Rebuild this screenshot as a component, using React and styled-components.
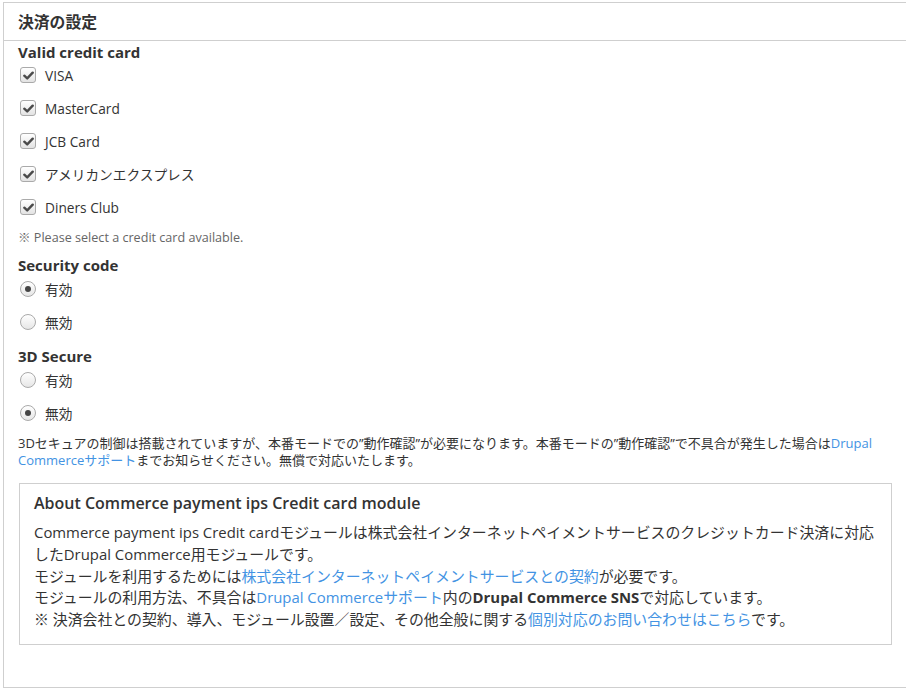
import React from "react";
import styled, { createGlobalStyle } from "styled-components";

const Global = createGlobalStyle`
  html, body { margin: 0; padding: 0; background: #fff; overflow: hidden; }
  body {
    font-family: "Open Sans", "Noto Sans CJK JP", sans-serif;
    color: #333;
    width: 906px;
    height: 688px;
  }
`;

const Fieldset = styled.section`
  margin: 2px 0 0 3px;
  width: 910px;
  border: 1px solid #cfcfcf;
  box-sizing: border-box;
  height: 686px;
`;

const Header = styled.h2`
  margin: 0;
  height: 38px;
  display: flex;
  align-items: center;
  padding: 0 14px 1px;
  box-sizing: border-box;
  font-size: 15.8px;
  font-weight: 700;
  border-bottom: 1px solid #cfcfcf;
  color: #333;
`;

const Body = styled.div`
  padding: 1px 20px 0 14px;
`;

const Group = styled.div`
  margin-top: ${(p) => p.$mt || 0}px;
`;

const Heading = styled.div`
  font-size: 15px;
  font-weight: 700;
  line-height: 20px;
  margin-bottom: ${(p) => p.$mb ?? 2}px;
`;

const Options = styled.div`
  display: flex;
  flex-direction: column;
  gap: 11px;
`;

const Option = styled.label`
  display: flex;
  align-items: center;
  gap: 9px;
  height: 22px;
  font-size: 13.7px;
  padding-left: 2px;
`;

const Box = styled.span`
  width: 16px;
  height: 16px;
  box-sizing: border-box;
  border: 1px solid #aaa;
  border-radius: 3px;
  background: linear-gradient(#ffffff, #e3e3e3);
  display: flex;
  align-items: center;
  justify-content: center;
`;

const Radio = styled.span`
  width: 16px;
  height: 16px;
  box-sizing: border-box;
  border: 1px solid #aaa;
  border-radius: 50%;
  background: linear-gradient(#ffffff, #e6e6e6);
  display: flex;
  align-items: center;
  justify-content: center;
`;

const Dot = styled.span`
  width: 6px;
  height: 6px;
  border-radius: 50%;
  background: #444;
`;

const Note = styled.div`
  font-size: 12.6px;
  line-height: 17px;
  color: #666;
  margin-top: ${(p) => p.$mt || 0}px;
`;

const Para = styled.p`
  margin: 11px 0 0;
  font-size: 13px;
  line-height: 17px;
  color: #333;
`;

const Link = styled.a`
  color: #4393e3;
  text-decoration: none;
`;

const InfoBox = styled.div`
  margin: 14px 0 0 1px;
  border: 1px solid #cfcfcf;
  padding: 8px 14px 13px;
`;

const InfoTitle = styled.div`
  font-size: 16px;
  font-weight: 600;
  line-height: 22px;
  margin-bottom: 8px;
`;

const InfoText = styled.div`
  font-size: 14.9px;
  line-height: 21.75px;
`;

const Check = () => (
  <svg width="11" height="9" viewBox="0 0 11 9">
    <path d="M1.3 4.7 L4.2 7.4 L9.7 1.7" fill="none" stroke="#4a4a4a" strokeWidth="2.4" strokeLinecap="round" strokeLinejoin="round" />
  </svg>
);

const CheckOpt = ({ children }) => (
  <Option>
    <Box><Check /></Box>
    {children}
  </Option>
);

const RadioOpt = ({ on, children }) => (
  <Option>
    <Radio>{on && <Dot />}</Radio>
    {children}
  </Option>
);

export default function App() {
  return (
    <>
      <Global />
      <Fieldset>
        <Header>決済の設定</Header>
        <Body>
          <Group>
            <Heading>Valid credit card</Heading>
            <Options>
              <CheckOpt>VISA</CheckOpt>
              <CheckOpt>MasterCard</CheckOpt>
              <CheckOpt>JCB Card</CheckOpt>
              <CheckOpt>アメリカンエクスプレス</CheckOpt>
              <CheckOpt>Diners Club</CheckOpt>
            </Options>
            <Note $mt={11}>※ Please select a credit card available.</Note>
          </Group>
          <Group $mt={9}>
            <Heading $mb={3}>Security code</Heading>
            <Options>
              <RadioOpt on>有効</RadioOpt>
              <RadioOpt>無効</RadioOpt>
            </Options>
          </Group>
          <Group $mt={13}>
            <Heading $mb={3}>3D Secure</Heading>
            <Options>
              <RadioOpt>有効</RadioOpt>
              <RadioOpt on>無効</RadioOpt>
            </Options>
          </Group>
          <Para>
            3Dセキュアの制御は搭載されていますが、本番モードでの”動作確認”が必要になります。本番モードの”動作確認”で不具合が発生した場合は<Link href="#">Drupal Commerceサポート</Link>までお知らせください。無償で対応いたします。
          </Para>
          <InfoBox>
            <InfoTitle>About Commerce payment ips Credit card module</InfoTitle>
            <InfoText>
              Commerce payment ips Credit cardモジュールは株式会社インターネットペイメントサービスのクレジットカード決済に対応したDrupal Commerce用モジュールです。
              <br />
              モジュールを利用するためには<Link href="#">株式会社インターネットペイメントサービスとの契約</Link>が必要です。
              <br />
              モジュールの利用方法、不具合は<Link href="#">Drupal Commerceサポート</Link>内の<b>Drupal Commerce SNS</b>で対応しています。
              <br />
              ※ 決済会社との契約、導入、モジュール設置／設定、その他全般に関する<Link href="#">個別対応のお問い合わせはこちら</Link>です。
            </InfoText>
          </InfoBox>
        </Body>
      </Fieldset>
    </>
  );
}
